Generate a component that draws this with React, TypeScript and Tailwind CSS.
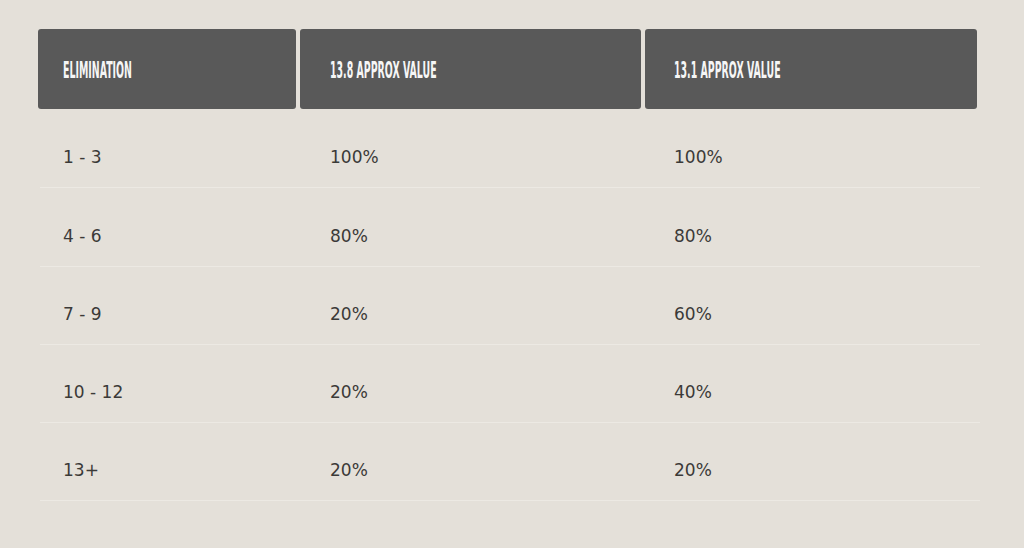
const rows = [
  ['1 - 3', '100%', '100%'],
  ['4 - 6', '80%', '80%'],
  ['7 - 9', '20%', '60%'],
  ['10 - 12', '20%', '40%'],
  ['13+', '20%', '20%'],
];

const headers = [
  { label: 'ELIMINATION', pad: 'pl-[25px]' },
  { label: '13.8 APPROX VALUE', pad: 'pl-[30px]' },
  { label: '13.1 APPROX VALUE', pad: 'pl-[29px]' },
];

export default function App() {
  return (
    <div className="w-[1024px] h-[548px] bg-[#e4e0d9] pt-[29px] pl-[38px]">
      <div className="w-[942px]">
        {/* Header */}
        <div className="grid grid-cols-[258px_341px_332px] gap-x-[4px]">
          {headers.map((h) => (
            <div
              key={h.label}
              className={`h-[80px] bg-[#595959] rounded-[3px] flex items-center pt-[3px] overflow-hidden ${h.pad}`}
            >
              <span
                className="inline-block origin-left scale-x-[0.455] whitespace-nowrap text-[#f6f6f6] text-[23px] font-bold leading-none"
                style={{ fontFamily: '"DejaVu Sans Condensed", "DejaVu Sans", sans-serif' }}
              >
                {h.label}
              </span>
            </div>
          ))}
        </div>

        {/* Body */}
        <div className="pl-[2px] pt-[1px]">
          {rows.map((r, i) => (
            <div
              key={i}
              className="grid grid-cols-[267px_344px_1fr] h-[78px] border-b border-[#ece9e3] pt-[37px] pl-[23px] text-[17px] leading-[20px] text-[#3b3a38] first:h-[78px] [&:nth-child(2)]:h-[79px] [&:nth-child(2)]:pt-[38px]"
              style={{ fontFamily: '"DejaVu Sans", sans-serif' }}
            >
              <div>{r[0]}</div>
              <div>{r[1]}</div>
              <div>{r[2]}</div>
            </div>
          ))}
        </div>
      </div>
    </div>
  );
}
